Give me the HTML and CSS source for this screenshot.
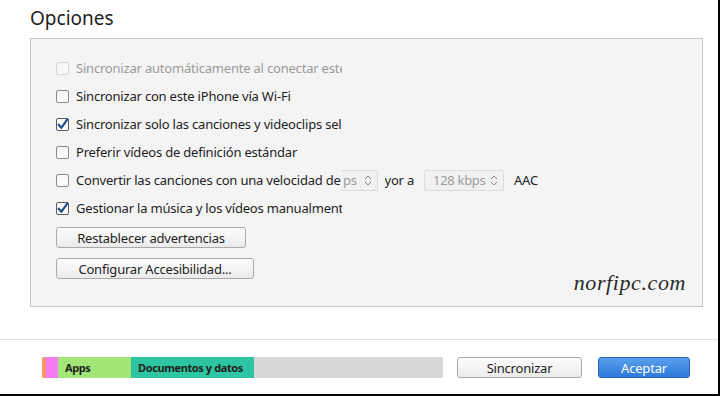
FILE: index.html
```html
<!DOCTYPE html>
<html lang="es">
<head>
<meta charset="utf-8">
<link rel="stylesheet" href="styles.css">
</head>
<body>
<div class="window">
  <h1 class="title">Opciones</h1>
  <section class="panel">
    <div class="row disabled">
      <span class="cb"></span>
      <span class="label">Sincronizar automáticamente al conectar este iPhone</span>
    </div>
    <div class="row">
      <span class="cb"></span>
      <span class="label">Sincronizar con este iPhone vía Wi-Fi</span>
    </div>
    <div class="row">
      <span class="cb checked"><svg viewBox="0 0 13 13" width="13" height="13"><path d="M2.6 6.6 L5.3 9.8 L11.2 1.6" fill="none" stroke="#1f4c8c" stroke-width="2.2" stroke-linecap="round" stroke-linejoin="round"/></svg></span>
      <span class="label">Sincronizar solo las canciones y videoclips seleccionados</span>
    </div>
    <div class="row">
      <span class="cb"></span>
      <span class="label">Preferir vídeos de definición estándar</span>
    </div>
    <div class="row">
      <span class="cb"></span>
      <span class="label short">Convertir las canciones con una velocidad de</span>
      <span class="select cut"><span class="sel-text">ps</span><svg class="chev" viewBox="0 0 8 11" width="8" height="11"><path d="M1 4 L4 1 L7 4 M1 7 L4 10 L7 7" fill="none" stroke="#8a8a8a" stroke-width="1"/></svg></span>
      <span class="cuttext"><span>yor a</span></span>
      <span class="select full"><span class="sel-text">128 kbps</span><svg class="chev" viewBox="0 0 8 11" width="8" height="11"><path d="M1 4 L4 1 L7 4 M1 7 L4 10 L7 7" fill="none" stroke="#8a8a8a" stroke-width="1"/></svg></span>
      <span class="aac">AAC</span>
    </div>
    <div class="row">
      <span class="cb checked"><svg viewBox="0 0 13 13" width="13" height="13"><path d="M2.6 6.6 L5.3 9.8 L11.2 1.6" fill="none" stroke="#1f4c8c" stroke-width="2.2" stroke-linecap="round" stroke-linejoin="round"/></svg></span>
      <span class="label">Gestionar la música y los vídeos manualmente</span>
    </div>
    <button class="btn wide1">Restablecer advertencias</button>
    <button class="btn wide2">Configurar Accesibilidad...</button>
    <div class="watermark">norfipc.com</div>
  </section>
  <footer class="footer">
    <div class="storage">
      <span class="seg s-orange"></span>
      <span class="seg s-pink"></span>
      <span class="seg s-apps">Apps</span>
      <span class="seg s-docs">Documentos y datos</span>
      <span class="seg s-free"></span>
    </div>
    <button class="btn sync">Sincronizar</button>
    <button class="btn accept">Aceptar</button>
  </footer>
</div>
</body>
</html>
```

FILE: styles.css
```css
html, body {
  margin: 0;
  padding: 0;
  background: #ffffff;
}
body {
  font-family: "Noto Sans", "Open Sans", sans-serif;
  color: #222222;
}
.window {
  width: 720px;
  height: 396px;
  box-sizing: border-box;
  border-right: 2px solid #000;
  border-bottom: 2px solid #000;
  display: flex;
  flex-direction: column;
  overflow: hidden;
}
.title {
  margin: 0;
  padding: 5px 0 0 30px;
  height: 38px;
  box-sizing: border-box;
  font-size: 19px;
  font-weight: normal;
  line-height: 26px;
  color: #1e1e1e;
}
.panel {
  position: relative;
  margin-left: 30px;
  width: 673px;
  height: 269px;
  box-sizing: border-box;
  border: 1px solid #c8c8c8;
  background: #f4f4f4;
  padding: 15px 0 0 25px;
  display: flex;
  flex-direction: column;
  align-items: flex-start;
}
.row {
  height: 28px;
  display: flex;
  align-items: center;
  font-size: 13px;
  letter-spacing: -0.2px;
  color: #1e1e1e;
  white-space: nowrap;
}
.row.disabled { color: #9a9a9a; }
.cb {
  width: 13px;
  height: 13px;
  box-sizing: border-box;
  border: 1px solid #8c8c8c;
  border-radius: 2px;
  background: linear-gradient(#f6f6f6, #ffffff);
  margin-right: 7px;
  flex: none;
  position: relative;
}
.disabled .cb { border-color: #d6d6d6; background: #f7f7f7; }
.cb.checked { border-color: #5a5a5a; }
.cb svg { position: absolute; left: -1px; top: -1px; }
.label {
  width: 266px;
  overflow: hidden;
}
.label.short { width: 265px; }
.select {
  height: 21px;
  box-sizing: border-box;
  display: flex;
  align-items: center;
  color: #9c9c9c;
  background: #f1f1f1;
  border: 1px solid #dcdcdc;
  border-radius: 2px;
  font-size: 13px;
}
.select.cut {
  width: 37px;
  border-left: none;
  border-radius: 0 2px 2px 0;
  padding-left: 2px;
  padding-right: 5px;
}
.select.full {
  width: 80px;
  padding-left: 8px;
  padding-right: 5px;
  margin-left: 10px;
  letter-spacing: -0.3px;
}
.sel-text { flex: 1; }
.chev { flex: none; }
.cuttext {
  margin-left: 7px;
  width: 29px;
  overflow: hidden;
  display: flex;
  justify-content: flex-end;
}
.aac { margin-left: 10px; }
.btn {
  font-family: "Noto Sans", "Open Sans", sans-serif;
  font-size: 13px;
  letter-spacing: -0.2px;
  color: #1e1e1e;
  height: 21px;
  box-sizing: border-box;
  border: 1px solid #a9a9a9;
  border-radius: 3px;
  background: linear-gradient(#fdfdfd, #ebebeb);
  padding: 0;
  line-height: 18px;
}
.wide1 { width: 190px; margin-top: 5px; }
.wide2 { width: 198px; margin-top: 10px; }
.watermark {
  position: absolute;
  right: 16px;
  bottom: 10px;
  font-family: "Liberation Serif", serif;
  font-style: italic;
  font-size: 22px;
  letter-spacing: 0.6px;
  color: #2a2a2a;
}
.footer {
  margin-top: 32px;
  border-top: 1px solid #e2e2e2;
  padding: 17px 0 0 42px;
  display: flex;
  align-items: flex-start;
}
.storage {
  width: 401px;
  height: 21px;
  display: flex;
  background: #d8d8d8;
  border-radius: 2px;
  overflow: hidden;
}
.seg {
  height: 21px;
  font-size: 11px;
  font-weight: bold;
  line-height: 21px;
  letter-spacing: -0.4px;
  color: #1e1e1e;
  box-sizing: border-box;
  white-space: nowrap;
}
.s-orange { width: 4px; background: #f5956b; }
.s-pink { width: 12px; background: #f47cf0; }
.s-apps { width: 73px; background: #a2e678; padding-left: 7px; }
.s-docs { width: 123px; background: #2ec5a2; padding-left: 7px; }
.s-free { flex: 1; background: #d8d8d8; }
.sync { width: 125px; margin-left: 14px; }
.accept {
  width: 92px;
  margin-left: 16px;
  color: #ffffff;
  border-color: #2a64b8;
  background: linear-gradient(#5aa0ec, #2c78dc);
}
```
